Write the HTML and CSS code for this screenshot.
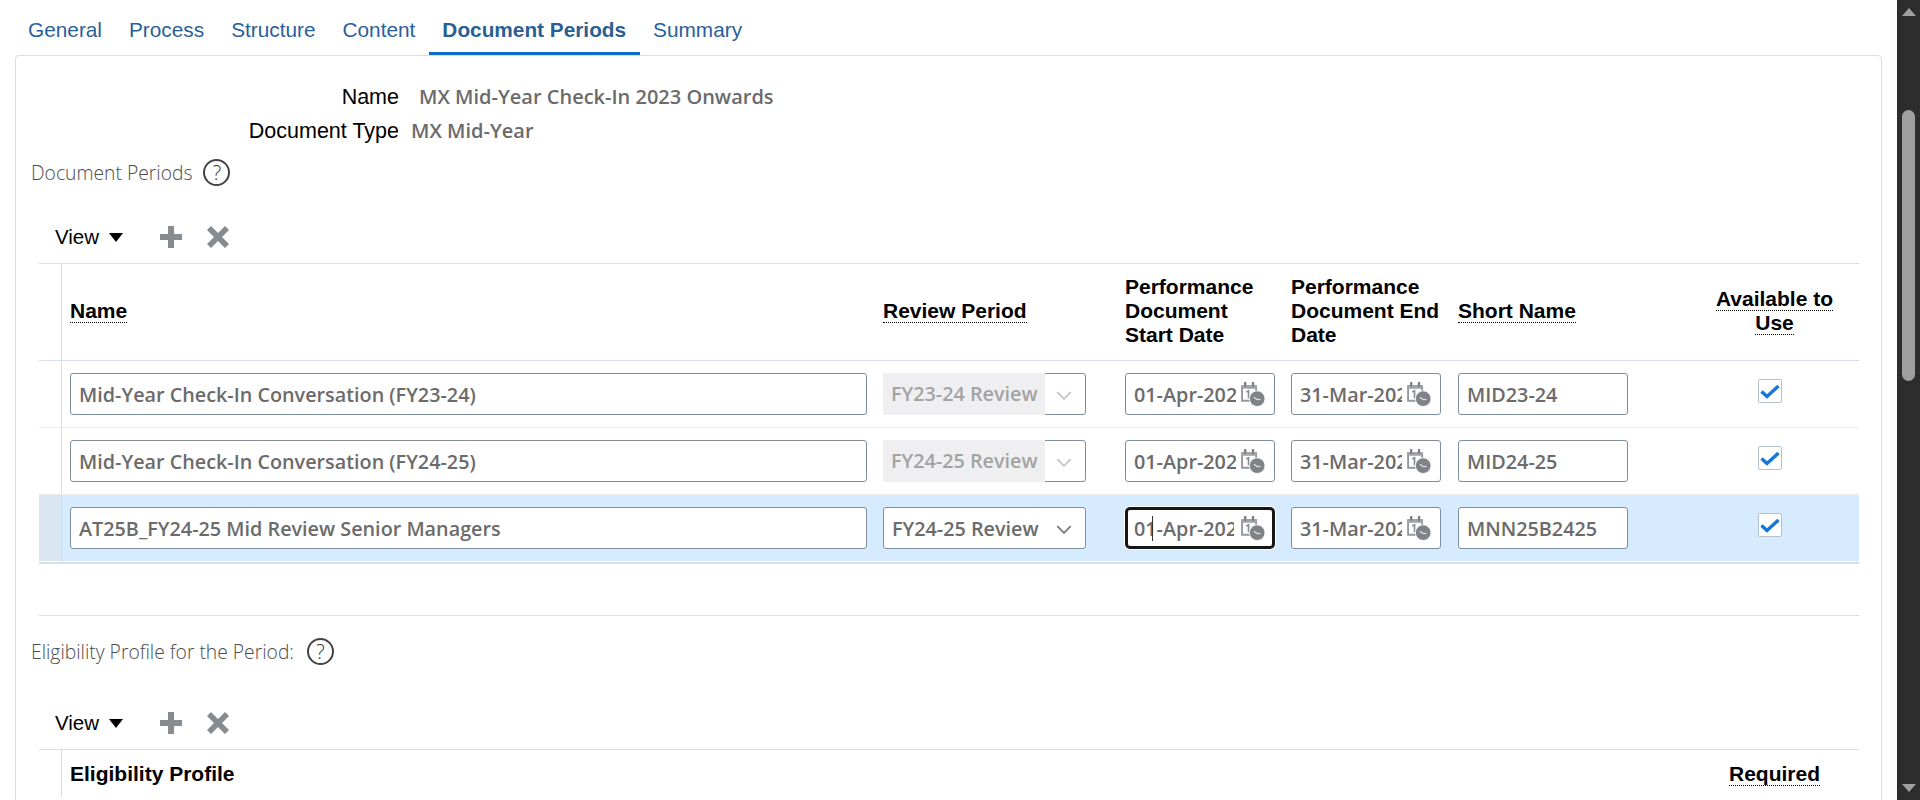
FILE: index.html
```html
<!DOCTYPE html>
<html lang="en">
<head>
  <meta charset="UTF-8" />
  <title>Document Periods</title>
  <link rel="stylesheet" href="styles.css">
</head>
<body>
  <svg class="defs" width="0" height="0">
    <symbol id="cal" viewBox="0 0 24 24">
      <path d="M2 4h13.5v14H2z" fill="none" stroke="#93979b" stroke-width="1.8"/>
      <path d="M1.5 3h14.5v3.5H1.5z" fill="#a0a4a7"/>
      <path d="M5 0v4.5M12.5 0v4.5" stroke="#7a7f83" stroke-width="2.2"/>
      <path d="M6 9.5l2.2-1v7" fill="none" stroke="#888c90" stroke-width="1.6"/>
      <circle cx="16.5" cy="16" r="7.5" fill="#7f8387" stroke="#ffffff" stroke-width=".8"/>
      <path d="M13.2 15c1.4-.3 2.3 1.9 4 1.9l2.4-.3" fill="none" stroke="#dfe1e3" stroke-width="1.2"/>
    </symbol>
    <symbol id="chev" viewBox="0 0 14 8">
      <path d="M1 1l6 6 6-6" fill="none" stroke="currentColor" stroke-width="1.6"/>
    </symbol>
    <symbol id="plus" viewBox="0 0 22 22">
      <path d="M8 0h6v8h8v6h-8v8H8v-8H0V8h8z" fill="#868b90"/>
    </symbol>
    <symbol id="cross" viewBox="0 0 22 22">
      <path d="M4 0l7 7 7-7 4 4-7 7 7 7-4 4-7-7-7 7-4-4 7-7-7-7z" fill="#868b90"/>
    </symbol>
    <symbol id="tick" viewBox="0 0 22 22">
      <path d="M2.5 11.5l5.5 5 11.5-10.5" fill="none" stroke="#1476d6" stroke-width="3.4"/>
    </symbol>
  </svg>

  <div class="page">
    <main class="main">
      <nav class="tabs">
        <a class="tab">General</a>
        <a class="tab">Process</a>
        <a class="tab">Structure</a>
        <a class="tab">Content</a>
        <a class="tab active">Document Periods</a>
        <a class="tab">Summary</a>
      </nav>

      <section class="card">
        <div class="info">
          <div class="info-label">Name</div>
          <div class="info-value name-value">MX Mid-Year Check-In 2023 Onwards</div>
          <div class="info-label">Document Type</div>
          <div class="info-value">MX Mid-Year</div>
        </div>

        <div class="heading">
          <h3>Document Periods</h3>
          <span class="help">?</span>
        </div>

        <div class="toolbar">
          <span class="view">View</span>
          <span class="view-arrow"></span>
          <svg class="tool tool-plus"><use href="#plus"/></svg>
          <svg class="tool"><use href="#cross"/></svg>
        </div>

        <table class="grid">
          <colgroup>
            <col class="c-sel"><col class="c-name"><col class="c-review"><col class="c-start"><col class="c-end"><col class="c-short"><col class="c-avail">
          </colgroup>
          <thead>
            <tr>
              <th class="sel"></th>
              <th><span class="tip">Name</span></th>
              <th><span class="tip">Review Period</span></th>
              <th>Performance Document Start Date</th>
              <th>Performance Document End Date</th>
              <th><span class="tip">Short Name</span></th>
              <th class="center"><span class="tip">Available to Use</span></th>
            </tr>
          </thead>
          <tbody>
            <tr>
              <td class="sel"></td>
              <td><input class="field field-name" value="Mid-Year Check-In Conversation (FY23-24)"></td>
              <td>
                <div class="select disabled"><span class="select-text">FY23-24 Review</span><svg class="chev"><use href="#chev"/></svg></div>
              </td>
              <td><div class="date"><input class="field" value="01-Apr-2023"><svg class="cal"><use href="#cal"/></svg></div></td>
              <td><div class="date"><input class="field" value="31-Mar-2024"><svg class="cal"><use href="#cal"/></svg></div></td>
              <td><input class="field field-short" value="MID23-24"></td>
              <td class="center"><span class="check"><svg><use href="#tick"/></svg></span></td>
            </tr>
            <tr>
              <td class="sel"></td>
              <td><input class="field field-name" value="Mid-Year Check-In Conversation (FY24-25)"></td>
              <td>
                <div class="select disabled"><span class="select-text">FY24-25 Review</span><svg class="chev"><use href="#chev"/></svg></div>
              </td>
              <td><div class="date"><input class="field" value="01-Apr-2024"><svg class="cal"><use href="#cal"/></svg></div></td>
              <td><div class="date"><input class="field" value="31-Mar-2025"><svg class="cal"><use href="#cal"/></svg></div></td>
              <td><input class="field field-short" value="MID24-25"></td>
              <td class="center"><span class="check"><svg><use href="#tick"/></svg></span></td>
            </tr>
            <tr class="selected">
              <td class="sel"></td>
              <td><input class="field field-name" value="AT25B_FY24-25 Mid Review Senior Managers"></td>
              <td>
                <div class="select"><span class="select-text">FY24-25 Review</span><svg class="chev"><use href="#chev"/></svg></div>
              </td>
              <td><div class="date focused"><input class="field" value="01-Apr-2024"><span class="caret"></span><svg class="cal"><use href="#cal"/></svg></div></td>
              <td><div class="date"><input class="field" value="31-Mar-2025"><svg class="cal"><use href="#cal"/></svg></div></td>
              <td><input class="field field-short" value="MNN25B2425"></td>
              <td class="center"><span class="check"><svg><use href="#tick"/></svg></span></td>
            </tr>
          </tbody>
        </table>

        <div class="divider"></div>

        <div class="heading heading-second">
          <h3>Eligibility Profile for the Period:</h3>
          <span class="help">?</span>
        </div>

        <div class="toolbar toolbar-second">
          <span class="view">View</span>
          <span class="view-arrow"></span>
          <svg class="tool tool-plus"><use href="#plus"/></svg>
          <svg class="tool"><use href="#cross"/></svg>
        </div>

        <table class="grid grid-short">
          <colgroup>
            <col class="c-sel"><col class="c-wide"><col class="c-avail">
          </colgroup>
          <thead>
            <tr>
              <th class="sel"></th>
              <th>Eligibility Profile</th>
              <th class="center"><span class="tip">Required</span></th>
            </tr>
          </thead>
        </table>
      </section>
    </main>

    <aside class="scrollbar">
      <span class="arrow-up"></span>
      <span class="thumb"></span>
      <span class="arrow-down"></span>
    </aside>
  </div>
</body>
</html>
```

FILE: styles.css
```css
* {
  box-sizing: border-box;
}

html,
body {
  margin: 0;
  height: 800px;
  overflow: hidden;
  background-color: #ffffff;
}

body {
  font-family: "Liberation Sans", Arial, sans-serif;
  color: #000000;
}

.defs {
  display: block;
  height: 0;
}

.page {
  display: flex;
  height: 800px;
}

.main {
  flex: 1;
  min-width: 0;
  overflow: hidden;
}

/* tabs */
.tabs {
  display: flex;
  height: 55px;
  padding-left: 14.5px;
  padding-top: 8px;
}

.tab {
  padding: 0 13.5px;
  font-size: 20.8px;
  line-height: 44px;
  height: 47px;
  color: #2a6099;
}

.tab.active {
  font-weight: bold;
  border-bottom: 3px solid #0f6fc6;
  color: #2b5f93;
}

/* card */
.card {
  margin: 0 15px 0 15px;
  height: 800px;
  border: 1px solid #d6dfe6;
  border-radius: 4px 4px 0 0;
}

.info {
  display: grid;
  grid-template-columns: 383px 1fr;
  column-gap: 12px;
  margin-top: 24px;
  font-size: 20px;
  line-height: 34px;
}

.info-label {
  text-align: right;
  font-size: 21.5px;
}

.info-value {
  font-family: "Open Sans", sans-serif;
  font-weight: 600;
  color: #6b6b6b;
}

.name-value {
  padding-left: 8px;
}

.heading {
  display: flex;
  align-items: center;
  gap: 11px;
  height: 34px;
  margin-top: 7px;
  padding-left: 15px;
}

.heading h3 {
  margin: 0;
  font-family: "Open Sans", sans-serif;
  font-weight: 300;
  font-size: 19.3px;
  color: #4c4c4c;
}

.help {
  width: 27px;
  height: 27px;
  border: 2px solid #444444;
  border-radius: 50%;
  font-family: "Open Sans", sans-serif;
  font-weight: 300;
  font-size: 20px;
  line-height: 23px;
  text-align: center;
  color: #333333;
}

.toolbar {
  display: flex;
  align-items: center;
  height: 52px;
  margin-top: 22px;
  padding-left: 39px;
}

.toolbar-second {
  margin-top: 29px;
}

.view {
  font-size: 20.5px;
}

.view-arrow {
  width: 0;
  height: 0;
  margin-left: 10px;
  border-left: 7px solid transparent;
  border-right: 7px solid transparent;
  border-top: 9px solid #000000;
}

.tool {
  width: 22px;
  height: 22px;
  margin-left: 25px;
}

.tool-plus {
  margin-left: 37px;
}

/* tables */
.grid {
  width: 1820px;
  margin-left: 23px;
  border-collapse: separate;
  border-spacing: 0;
  table-layout: fixed;
  border-top: 1px solid #d6dfe6;
}

.c-sel { width: 23px; }
.c-name { width: 813px; }
.c-review { width: 242px; }
.c-start { width: 166px; }
.c-end { width: 167px; }
.c-short { width: 242px; }
.c-avail { width: 167px; }
.c-wide { width: 1630px; }

.grid th {
  height: 97px;
  padding: 0 8px 2px;
  font-size: 21px;
  line-height: 24px;
  text-align: left;
  border-bottom: 1px solid #d6dfe6;
}

.grid-short th {
  height: 48px;
  padding-bottom: 0;
  border-bottom: none;
}

.grid th.center {
  padding-right: 10px;
  text-align: center;
}

.grid td {
  height: 67px;
  padding: 0 8px;
  border-bottom: 1px solid #e9edf0;
}

.grid .sel {
  padding: 0;
  border-right: 1px solid #d6dfe6;
}

.grid tbody tr:last-child td {
  height: 69px;
  padding-bottom: 2px;
  border-bottom: 2px solid #d6dfe6;
  box-shadow: inset 0 -1px 0 #ffffff;
}

.tip {
  border-bottom: 1px dotted #000000;
}

.selected td {
  background-color: #d6ebfd;
}

.selected .sel {
  background-color: #dae7f3;
}

/* form fields */
.field,
.select {
  display: block;
  height: 42px;
  border: 1px solid #7d8f9e;
  border-radius: 3px;
  background-color: #ffffff;
  font-family: "Open Sans", sans-serif;
  font-weight: 600;
  font-size: 19.8px;
  color: #6b6b6b;
}

.field {
  width: 100%;
  padding: 1px 38px 0 8px;
  outline: none;
}

.field-name {
  width: 797px;
  padding-right: 8px;
}

.field-short {
  width: 170px;
  padding-right: 8px;
}

.select {
  position: relative;
  width: 203px;
  line-height: 42px;
}

.select-text {
  display: block;
  height: 40px;
  padding-left: 8px;
  white-space: nowrap;
}

.select.disabled {
  color: #a3a3a3;
}

.select.disabled .select-text {
  width: 162px;
  margin: -1px 0 0 -1px;
  height: 42px;
  background-color: #efeff1;
  border-radius: 2px 0 0 2px;
}

.chev {
  position: absolute;
  right: 13px;
  top: 17px;
  width: 16px;
  height: 9px;
  color: #7b7b7b;
}

.disabled .chev {
  color: #c6c6c6;
}

.date {
  position: relative;
  width: 150px;
}

.cal {
  position: absolute;
  right: 10px;
  top: 9px;
  width: 25px;
  height: 25px;
}

.focused .field {
  border: 3px solid #161616;
  border-radius: 5px;
  padding-left: 6px;
  box-shadow: 0 0 0 1px #ffffff;
}

.caret {
  position: absolute;
  left: 27px;
  top: 9px;
  width: 1px;
  height: 25px;
  background-color: #333333;
}

.check {
  display: block;
  width: 24px;
  height: 24px;
  margin: -6px 0 0 58px;
  border: 1px solid #b4c2ce;
  border-radius: 2px;
  background-color: #ffffff;
}

.check svg {
  display: block;
  width: 22px;
  height: 22px;
}

.divider {
  width: 1820px;
  height: 1px;
  margin: 51px 0 0 23px;
  background-color: #d6dfe6;
}

.heading-second {
  gap: 13px;
  margin-top: 18px;
}

/* dark scrollbar on the right */
.scrollbar {
  position: relative;
  flex: none;
  width: 23px;
  background-color: #2d2d2d;
}

.thumb {
  position: absolute;
  left: 5px;
  top: 110px;
  width: 13px;
  height: 271px;
  border-radius: 7px;
  background-color: #9f9f9f;
}

.arrow-up,
.arrow-down {
  position: absolute;
  left: 5px;
  width: 0;
  height: 0;
  border-left: 7px solid transparent;
  border-right: 7px solid transparent;
}

.arrow-up {
  top: 8px;
  border-bottom: 8px solid #a0a0a0;
}

.arrow-down {
  bottom: 8px;
  border-top: 8px solid #a0a0a0;
}
```
